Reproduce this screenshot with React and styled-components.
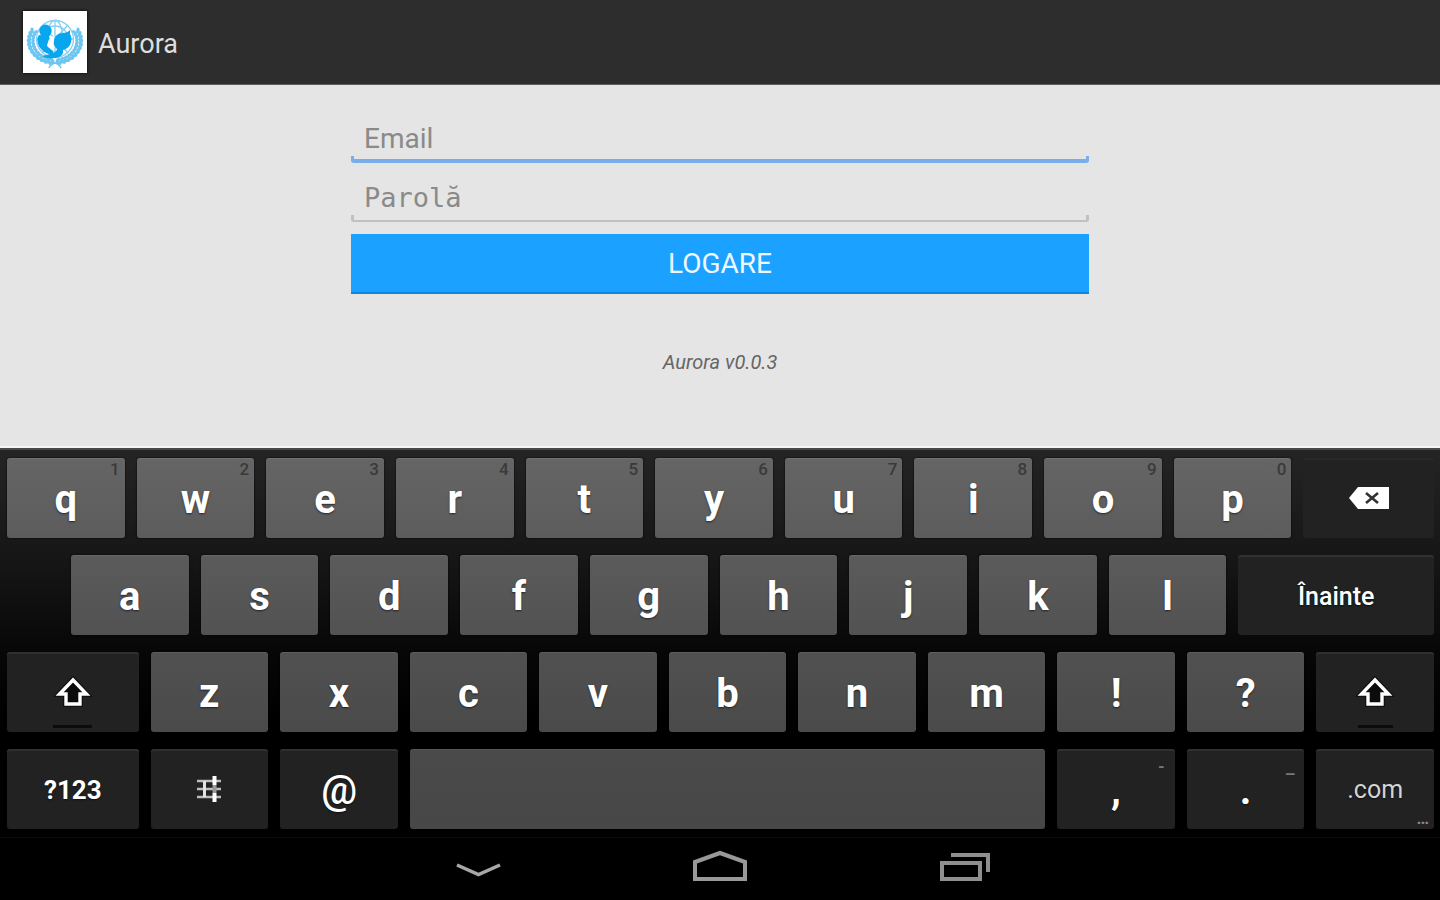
import React from "react";
import styled, { createGlobalStyle, css } from "styled-components";

const GlobalStyle = createGlobalStyle`
  *, *::before, *::after { box-sizing: border-box; }
  body {
    margin: 0;
    background: #000;
    font-family: Roboto, "Liberation Sans", sans-serif;
  }
  button, input { font: inherit; }
`;

const Screen = styled.div`
  display: flex;
  flex-direction: column;
  min-height: 100vh;
`;

const ActionBar = styled.header`
  display: flex;
  align-items: center;
  gap: 11px;
  height: 85px;
  padding: 0 23px;
  background: #2d2d2d;
  border-bottom: 1px solid #5e5e5e;
`;

const Logo = styled.svg`
  flex: none;
  width: 64px;
  height: 62px;
  background: #fff;
  box-shadow: 0 0 3px #000;
`;

const Title = styled.h1`
  margin: 0;
  padding-top: 4px;
  color: #dedede;
  font-size: 27px;
  line-height: 32px;
  font-weight: 400;
`;

const Content = styled.main`
  flex: 1;
  display: flex;
  flex-direction: column;
  align-items: center;
  padding: 36px 24px 24px;
  background: #e5e5e5;
  border-bottom: 2px solid #f4f4f4;
`;

const LoginForm = styled.form`
  display: flex;
  flex-direction: column;
  width: 100%;
  max-width: 738px;
`;

const Field = styled.input`
  width: 100%;
  height: 42px;
  margin-bottom: 17px;
  padding: 0 13px 7px;
  border: 0;
  outline: 0;
  color: #333;
  font-size: 28px;
  ${({ $focused }) => {
    const tone = $focused ? "#79aeea" : "#c0c0c0";
    const thick = $focused ? "4px" : "2px";
    return css`
      background:
        linear-gradient(${tone}, ${tone}) left bottom / 3px 7px no-repeat,
        linear-gradient(${tone}, ${tone}) right bottom / 3px 7px no-repeat,
        linear-gradient(${tone}, ${tone}) left bottom / 100% ${thick} no-repeat;
      border-radius: 0 0 3px 3px;
    `;
  }}
  ${({ $mono }) =>
    $mono &&
    css`
      font-family: "DejaVu Sans Mono", "Liberation Mono", monospace;
      font-size: 27px;
    `}

  &::placeholder { color: #8a8a8a; opacity: 1; }
`;

const SubmitButton = styled.button`
  height: 60px;
  margin-top: -5px;
  padding: 1px 0 0;
  border: 0;
  border-bottom: 2px solid #0b87e2;
  background: #1ba1ff;
  color: #eef8ff;
  font-size: 28px;
`;

const Version = styled.p`
  margin: 56px 0 0;
  color: #666;
  font-size: 20px;
  line-height: 24px;
  font-style: italic;
`;

const Keyboard = styled.section`
  display: flex;
  flex-direction: column;
  gap: 17px;
  padding: 8px 6px 8px 7px;
  border-top: 2px solid #484848;
  background: linear-gradient(#242424, #151515 30%, #070707 52%, #000 70%);
`;

const KeyRow = styled.div`
  display: flex;
  gap: 12px;
`;

const RowIndent = styled.span`
  flex: 52 1 0;
`;

const letterTones = [
  ["#656565", "#5c5c5c"],
  ["#5b5b5b", "#525252"],
  ["#515151", "#4a4a4a"],
  ["#4a4a4a", "#474747"],
];

const labelSizes = {
  letter: css`padding-top: 4px; font-size: 40px; font-weight: 700;`,
  symbol: css`padding-top: 4px; font-size: 40px; font-weight: 500;`,
  word: css`padding-top: 4px; font-size: 25px; font-weight: 500;`,
  strong: css`padding-top: 2px; font-size: 26px; font-weight: 700;`,
  light: css`padding-top: 2px; font-size: 25px; font-weight: 400; color: #d4d4d4;`,
  icon: css`padding-top: 0;`,
};

const KeyButton = styled.button`
  position: relative;
  flex: ${({ $span }) => $span} 1 0;
  min-width: 0;
  display: flex;
  align-items: center;
  justify-content: center;
  height: 80px;
  padding: 0;
  border: 0;
  border-radius: 3px;
  color: #fff;
  line-height: 48px;
  text-shadow: 0 1px 2px rgba(0, 0, 0, 0.6);
  ${({ $dark, $row }) =>
    $dark
      ? css`
          background: #222;
          box-shadow: inset 0 2px 0 ${$row === 0 ? "#292929" : "#303030"};
        `
      : css`
          background: linear-gradient(${letterTones[$row][0]}, ${letterTones[$row][1]});
          box-shadow: inset 0 1px 0 rgba(255, 255, 255, 0.08), 0 0 2px #000;
        `}
  ${({ $label }) => labelSizes[$label]}
`;

const hintPlaces = {
  digit: css`top: 1px; right: 5px; color: #3a3a3a;`,
  upper: css`top: 7px; right: 10px; color: #777; font-weight: 700;`,
  lower: css`top: 15px; right: 9px; color: #777; font-weight: 700;`,
  corner: css`bottom: 1px; right: 5px; color: #888; font-weight: 700;`,
};

const Hint = styled.span`
  position: absolute;
  font-size: 17px;
  line-height: 20px;
  font-weight: 500;
  text-shadow: none;
  ${({ $place }) => hintPlaces[$place]}
`;

const ShiftMark = styled.span`
  position: absolute;
  left: 35%;
  right: 35%;
  bottom: 4px;
  height: 3px;
  background: #0c0c0c;
`;

const KeyIcon = styled.svg`
  display: block;
  flex: none;
`;

const NavBar = styled.nav`
  display: flex;
  justify-content: center;
  align-items: center;
  gap: 185px;
  height: 63px;
  background: #000;
  border-top: 1px solid #0c0c0c;
`;

const NavButton = styled.button`
  display: block;
  width: 60px;
  height: 48px;
  padding: 0;
  border: 0;
  background: transparent;
`;

function Emblem() {
  const leaves = [];
  for (let i = 0; i < 12; i++) {
    const turn = 98 + i * 10;
    const a = (turn * Math.PI) / 180;
    const cos = Math.cos(a);
    const sin = Math.sin(a);
    const ox = 32 + cos * 26;
    const oy = 30 + sin * 22;
    const ix = 32 + cos * 22;
    const iy = 30 + sin * 19;
    leaves.push(
      <g key={i}>
        <ellipse cx={ox} cy={oy} rx="3.2" ry="1.7" transform={`rotate(${turn + 60} ${ox} ${oy})`} />
        <ellipse cx={ix} cy={iy} rx="2.8" ry="1.5" transform={`rotate(${turn + 115} ${ix} ${iy})`} />
      </g>
    );
  }
  return (
    <Logo viewBox="0 0 64 62" role="img" aria-label="Aurora">
      <g fill="none" stroke="#86cff3" strokeWidth="1.3">
        <circle cx="32" cy="28" r="18.5" />
        <circle cx="32" cy="28" r="13" />
        <ellipse cx="32" cy="28" rx="8" ry="18.5" />
        <path d="M32 9v38M13 28h38M19 14l26 28M45 14L19 42" />
      </g>
      <g fill="#6cc6ef">
        {leaves}
        <g transform="translate(64 0) scale(-1 1)">{leaves}</g>
      </g>
      <path
        d="M11 42c5 7 13 9 21 10 3 1 5 2 6 5M53 42c-5 7-13 9-21 10-3 1-5 2-6 5"
        fill="none"
        stroke="#6cc6ef"
        strokeWidth="1.5"
      />
      <path fill="#fff" d="M24 31l6-6 5 4-3 7-6 4-4-2z" />
      <g fill="#08a6ee">
        <ellipse cx="22.500" cy="20" rx="6.200" ry="6.500" />
        <path d="M16 24l10 1c1 2 0 3-1 6 0 2-2 3 0 5l5 4v4c-7-1-13-5-15-11-1-4-1-6 1-9z" />
        <path d="M31 30c0-5 4-8 9-8 3 0 5-1 7-3v4c2 3 2 7 0 11-2 3-4 4-7 5v3c-1 3-5 5-9 5-4 1-9 0-12-2 5-1 8-2 11-3 2-1 4-2 4-4-2-2-4-4-3-8z" />
      </g>
    </Logo>
  );
}

function BackspaceIcon() {
  return (
    <KeyIcon width="42" height="24" viewBox="0 0 42 24" aria-hidden="true">
      <path d="M1 12L10 1h31v22H10z" fill="#fff" />
      <path d="M18 7l12 10M30 7L18 17" stroke="#333" strokeWidth="2.6" />
    </KeyIcon>
  );
}

function ShiftIcon() {
  return (
    <KeyIcon width="38" height="32" viewBox="0 0 38 32" aria-hidden="true">
      <path d="M19 4L32.500 18H26v10H12V18H5.500z" fill="#0c0c0c" stroke="#000" strokeWidth="6" opacity="0.500" />
      <path d="M19 4L32.500 18H26v10H12V18H5.500z" fill="#0c0c0c" stroke="#fff" strokeWidth="3.400" />
    </KeyIcon>
  );
}

function SettingsIcon() {
  return (
    <KeyIcon width="28" height="28" viewBox="0 0 28 28" aria-hidden="true">
      <path d="M2 6h24M2 14h6M11 14h15M2 22h24" stroke="#bdbdbd" strokeWidth="2.400" />
      <path d="M9.500 6v16" stroke="#e4e4e4" strokeWidth="3" />
      <path d="M19.500 1v9M19.500 18v9" stroke="#fff" strokeWidth="4" />
      <path d="M19.500 10v8" stroke="#999" strokeWidth="4" />
    </KeyIcon>
  );
}

const icons = { backspace: BackspaceIcon, shift: ShiftIcon, settings: SettingsIcon };

const letters = (text) => [...text].map((label) => ({ label }));

const rows = [
  [
    ...[..."qwertyuiop"].map((label, i) => ({ label, hint: "1234567890"[i], place: "digit" })),
    { icon: "backspace", name: "Ștergere", span: 131, dark: true, kind: "icon" },
  ],
  [...letters("asdfghjkl"), { label: "Înainte", span: 196, dark: true, kind: "word" }],
  [
    { icon: "shift", name: "Shift", span: 132, dark: true, mark: true, kind: "icon" },
    ...letters("zxcvbnm!?"),
    { icon: "shift", name: "Shift", dark: true, mark: true, kind: "icon" },
  ],
  [
    { label: "?123", span: 132, dark: true, kind: "strong" },
    { icon: "settings", name: "Setări", dark: true, kind: "icon" },
    { label: "@", dark: true, kind: "symbol" },
    { name: "Spațiu", span: 637 },
    { label: ",", dark: true, hint: "-", place: "upper" },
    { label: ".", dark: true, hint: "–", place: "lower" },
    { label: ".com", dark: true, kind: "light", hint: "…", place: "corner" },
  ],
];

function Key({ data, row }) {
  const Icon = data.icon && icons[data.icon];
  return (
    <KeyButton
      type="button"
      aria-label={data.name}
      $span={data.span || 118}
      $dark={data.dark}
      $row={row}
      $label={data.kind || "letter"}
    >
      {Icon ? <Icon /> : data.label}
      {data.hint && <Hint $place={data.place}>{data.hint}</Hint>}
      {data.mark && <ShiftMark />}
    </KeyButton>
  );
}

export default function App() {
  return (
    <Screen>
      <GlobalStyle />
      <ActionBar>
        <Emblem />
        <Title>Aurora</Title>
      </ActionBar>
      <Content>
        <LoginForm onSubmit={(e) => e.preventDefault()}>
          <Field type="email" placeholder="Email" aria-label="Email" $focused />
          <Field type="password" placeholder="Parolă" aria-label="Parolă" $mono />
          <SubmitButton type="submit">LOGARE</SubmitButton>
        </LoginForm>
        <Version>Aurora v0.0.3</Version>
      </Content>
      <Keyboard aria-label="Tastatură">
        {rows.map((keys, r) => (
          <KeyRow key={r}>
            {r === 1 && <RowIndent />}
            {keys.map((k, i) => (
              <Key key={i} data={k} row={r} />
            ))}
          </KeyRow>
        ))}
      </Keyboard>
      <NavBar aria-label="Sistem">
        <NavButton type="button" aria-label="Înapoi">
          <KeyIcon width="60" height="48" viewBox="0 0 60 48" fill="none" stroke="#a8a8a8" strokeWidth="3.500">
            <path d="M12 20l21.500 9.500L55 20" />
          </KeyIcon>
        </NavButton>
        <NavButton type="button" aria-label="Acasă">
          <KeyIcon width="60" height="48" viewBox="0 0 60 48" fill="none" stroke="#999" strokeWidth="4">
            <path d="M5 34V17L30 8l25 9v17z" />
          </KeyIcon>
        </NavButton>
        <NavButton type="button" aria-label="Aplicații recente">
          <KeyIcon width="60" height="48" viewBox="0 0 60 48" fill="none" stroke="#8f8f8f" strokeWidth="4">
            <path d="M7 18h38v16H7zM16 10h37v17" />
          </KeyIcon>
        </NavButton>
      </NavBar>
    </Screen>
  );
}
